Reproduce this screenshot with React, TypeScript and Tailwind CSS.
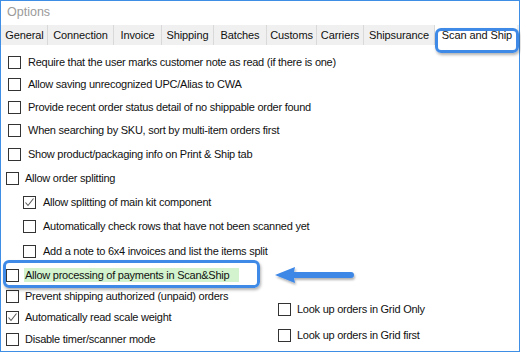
import React from "react";

const Box = ({ checked }: { checked?: boolean }) => (
  <span className="relative flex h-[13px] w-[13px] shrink-0 items-center justify-center border border-[#333333] bg-white">
    {checked && (
      <svg width="11" height="11" viewBox="0 0 11 11" className="absolute left-[0px] top-[0px]">
        <polyline points="1.5,5.5 4,8.5 9.5,1.5" fill="none" stroke="#5a5a5a" strokeWidth="1.1" />
      </svg>
    )}
  </span>
);

type RowProps = {
  label: string;
  h: number;
  checked?: boolean;
  indent?: boolean;
  main?: boolean;
  green?: boolean;
};

const Row = ({ label, h, checked, indent, main, green }: RowProps) => (
  <div
    className={
      "flex items-center " +
      (indent ? "pl-[22px] gap-[7px]" : main ? "pl-[7px] gap-[7px]" : "pl-[5px] gap-[6px]")
    }
    style={{ height: h }}
  >
    <Box checked={checked} />
    {green ? (
      <span className="-ml-[1px] flex h-[14px] w-[215px] items-center bg-[#d2f3cd] pl-[1px]">{label}</span>
    ) : (
      <span className="whitespace-nowrap">{label}</span>
    )}
  </div>
);

const tabs: { name: string; w: number }[] = [
  { name: "General", w: 46 },
  { name: "Connection", w: 66 },
  { name: "Invoice", w: 48 },
  { name: "Shipping", w: 52 },
  { name: "Batches", w: 53 },
  { name: "Customs", w: 50 },
  { name: "Carriers", w: 47 },
  { name: "Shipsurance", w: 71 },
];

export default function App() {
  return (
    <div
      className="relative h-[353px] w-[521px] overflow-hidden bg-white text-[11px] tracking-[-0.25px] text-[#111111]"
      style={{ fontFamily: '"Liberation Sans", Arial, sans-serif' }}
    >
      <div className="relative flex h-[352px] w-[520px] flex-col border border-[#3d8ee4]">
        <div className="flex h-[26px] items-center pl-[6px] pb-[1px] text-[12.5px] tracking-normal text-[#9b9b9b]">Options</div>
        <div className="flex h-[21px] bg-[#f0f0f0] pl-[1px]">
          {tabs.map((t) => (
            <div
              key={t.name}
              className="flex items-center justify-center border-r border-[#d9d9d9] pt-[1px] tracking-[-0.1px]"
              style={{ width: t.w }}
            >
              {t.name}
            </div>
          ))}
          <div className="flex w-[82px] items-start justify-center bg-white pl-[2px] pt-[2px] tracking-[-0.1px]">Scan and Ship</div>
        </div>
        <div className="flex flex-col pt-[6px]">
          <Row main h={22} label="Require that the user marks customer note as read (if there is one)" />
          <Row main h={23} label="Allow saving unrecognized UPC/Alias to CWA" />
          <Row main h={23} label="Provide recent order status detail of no shippable order found" />
          <Row main h={23} label="When searching by SKU, sort by multi-item orders first" />
          <Row main h={24} label="Show product/packaging info on Print & Ship tab" />
          <Row h={25} label="Allow order splitting" />
          <Row indent checked h={23} label="Allow splitting of main kit component" />
          <Row indent h={25} label="Automatically check rows that have not been scanned yet" />
          <Row indent h={24} label="Add a note to 6x4 invoices and list the items split" />
          <Row green h={24} label="Allow processing of payments in Scan&Ship" />
          <div className="flex">
            <div className="flex w-[272px] flex-col">
              <Row h={19} label="Prevent shipping authorized (unpaid) orders" />
              <Row checked h={22} label="Automatically read scale weight" />
              <Row h={23} label="Disable timer/scanner mode" />
            </div>
            <div className="flex flex-col gap-[4px] pt-[11px]">
              <Row h={22} label="Look up orders in Grid Only" />
              <Row h={22} label="Look up orders in Grid first" />
            </div>
          </div>
        </div>
      </div>

      {/* annotation: tab highlight */}
      <div className="absolute left-[435px] top-[28px] h-[25px] w-[84px] rounded-[6px] border-[3px] border-[#3f8ae6] shadow-[1px_2px_3px_rgba(0,0,0,0.3)]" />
      {/* annotation: row highlight */}
      <div className="absolute left-[3px] top-[260px] h-[28px] w-[257px] rounded-[6px] border-[3px] border-[#3f8ae6] shadow-[1px_2px_3px_rgba(0,0,0,0.3)]" />
      {/* annotation: arrow */}
      <svg className="absolute left-[272px] top-[262px]" width="90" height="28" viewBox="0 0 90 28">
        <defs>
          <filter id="sh" x="-20%" y="-50%" width="140%" height="200%">
            <feDropShadow dx="1" dy="2" stdDeviation="1.2" floodColor="#000" floodOpacity="0.3" />
          </filter>
        </defs>
        <g filter="url(#sh)">
          <path d="M3 13 L23 5 L22 10 L79 10 A3 3 0 0 1 79 16 L22 16 L23 21 Z" fill="#3d87e6" />
        </g>
      </svg>
    </div>
  );
}
